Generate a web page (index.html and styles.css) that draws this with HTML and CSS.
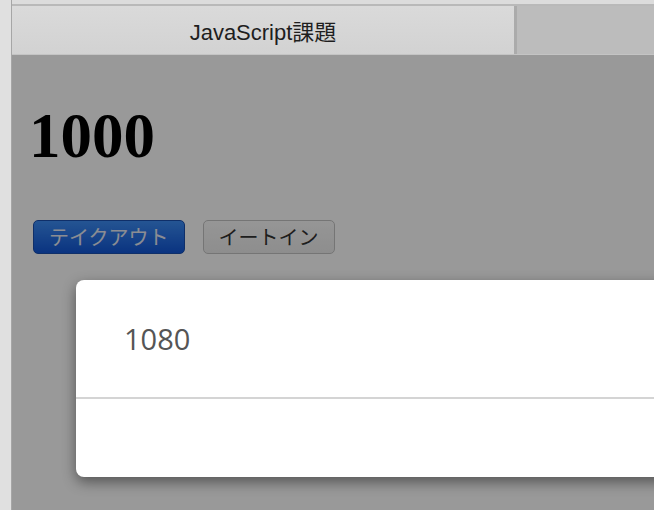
FILE: index.html
```html
<!DOCTYPE html>
<html lang="ja">
<head>
    <meta charset="UTF-8">
    <meta name="viewport" content="width=device-width, initial-scale=1.0">
    <title>JavaScript課題</title>
    <link rel="stylesheet" href="styles.css">
</head>
<body>

<div class="sidebar"></div>

<div class="window">
    <!-- Tab bar -->
    <div class="topline"></div>
    <div class="tabs">
        <div class="tab active">JavaScript課題</div>
        <div class="tab"></div>
    </div>

    <!-- Page content -->
    <div class="page">
        <h1 class="price">1000</h1>

        <div class="choices">
            <button class="choice selected">テイクアウト</button>
            <button class="choice">イートイン</button>
        </div>

        <!-- Modal shown over the page -->
        <div class="overlay"></div>
        <div class="modal">
            <div class="modal-body">1080</div>
            <div class="modal-footer"></div>
        </div>
    </div>
</div>

</body>
</html>
```

FILE: styles.css
```css
html, body {
    height: 100%;
}
body {
    margin: 0;
    display: flex;
    overflow: hidden;
    background-color: #dedede;
    font-family: "Liberation Sans", "Noto Sans CJK JP", sans-serif;
}
.sidebar {
    width: 11px;
    flex-shrink: 0;
    background-color: #e0e0e0;
    border-right: 1px solid #a6a6a6;
}
.window {
    flex: 1;
    display: flex;
    flex-direction: column;
    min-width: 0;
}
.topline {
    height: 4px;
    background-color: #dcdcdc;
    border-bottom: 2px solid #b9b9b9;
}
.tabs {
    display: flex;
    height: 48px;
    border-bottom: 1px solid #c4c4c4;
}
.tab {
    display: flex;
    align-items: center;
    justify-content: center;
    font-size: 22px;
    color: #1e1e1e;
    background-color: #bcbcbc;
}
.tab.active {
    width: 502px;
    background: linear-gradient(#dadada, #d2d2d2);
    border-right: 3px solid #ababab;
}
.tab:last-child {
    flex: 1;
}

.page {
    position: relative;
    flex: 1;
    background-color: #fff;
    padding: 0 21px;
}
.price {
    margin: 45px 0 47px -4px;
    font-family: "Liberation Serif", serif;
    font-size: 63px;
    font-weight: bold;
    color: #000;
}
.choices {
    display: flex;
    gap: 18px;
}
.choice {
    font-family: "Noto Sans CJK JP", sans-serif;
    font-size: 20px;
    line-height: 24px;
    padding: 4px 15px;
    border-radius: 5px;
    border: 1px solid #c4c4c4;
    background: linear-gradient(#fafafa, #ececec);
    color: #333;
}
.choice.selected {
    border-color: #1a4fb0;
    background: linear-gradient(#3d8df5, #1156d6);
    color: #e8ecf5;
}

.overlay {
    position: absolute;
    inset: 0;
    background-color: rgba(0, 0, 0, 0.4);
}
.modal {
    position: absolute;
    top: 225px;
    left: 64px;
    width: 700px;
    background-color: #fff;
    border-radius: 8px;
    box-shadow: 0 5px 14px rgba(0, 0, 0, 0.45);
}
.modal-body {
    height: 117px;
    display: flex;
    align-items: center;
    padding-left: 48px;
    font-family: "Open Sans", sans-serif;
    font-size: 29px;
    color: #555;
    border-bottom: 2px solid #d4d4d4;
}
.modal-footer {
    height: 78px;
}
```
